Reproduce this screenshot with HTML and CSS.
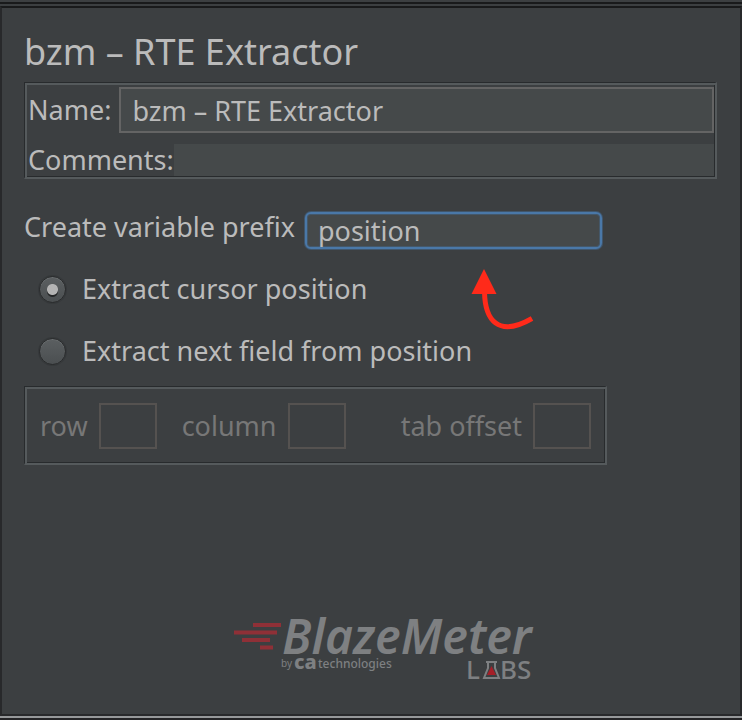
FILE: index.html
```html
<!DOCTYPE html>
<html lang="en">
<head>
<meta charset="utf-8">
<title>bzm – RTE Extractor</title>
<link rel="stylesheet" href="styles.css">
</head>
<body>
<div class="divider"></div>
<main class="window">
  <h1 class="title">bzm – RTE Extractor</h1>
  <form class="form">
    <div class="panel element">
      <div class="element-row name-row">
        <label for="name">Name:</label>
        <input class="field name-field" id="name" type="text" value="bzm – RTE Extractor">
      </div>
      <div class="element-row comments-row">
        <label for="comments">Comments:</label>
        <input class="field comments-field" id="comments" type="text">
      </div>
    </div>

    <div class="prefix-row">
      <label for="prefix">Create variable prefix</label>
      <div class="prefix-wrap">
        <input class="field prefix-field" id="prefix" type="text" value="position">
        <svg class="arrow" viewBox="0 0 64 62" width="64" height="62" aria-hidden="true">
          <path d="M14.500 24C15 52 28 70 62 50.500" fill="none" stroke="#ff2a1a" stroke-width="5"/>
          <path d="M14 1L26.500 26H1.500Z" fill="#ff2a1a"/>
        </svg>
      </div>
    </div>

    <div class="option">
      <input class="radio" type="radio" name="mode" id="cursor" checked>
      <label for="cursor">Extract cursor position</label>
    </div>
    <div class="option">
      <input class="radio" type="radio" name="mode" id="next">
      <label for="next">Extract next field from position</label>
    </div>

    <div class="panel position">
      <label class="row-label" for="row">row</label>
      <input class="field small" id="row" type="text" disabled>
      <label class="column-label" for="column">column</label>
      <input class="field small" id="column" type="text" disabled>
      <label class="tab-label" for="tab">tab offset</label>
      <input class="field small" id="tab" type="text" disabled>
    </div>
  </form>

  <footer class="brand">
    <svg class="logo" viewBox="0 -12 310 90" width="310" height="90" role="img" aria-label="BlazeMeter Labs by ca technologies">
      <path d="M21 12H49M2 19.500H45M10 27H38M28 34.500H41" stroke="#8f3037" stroke-width="4"/>
      <text class="logo-name" x="50" y="41">BlazeMeter</text>
      <text class="logo-by" x="49" y="54">by</text>
      <text class="logo-ca" x="62" y="56">ca</text>
      <text class="logo-tech" x="86" y="55">technologies</text>
      <text class="logo-labs" x="234" y="66">L</text>
      <text class="logo-labs" x="268" y="66">BS</text>
      <path d="M259.500 53L264 62H255Z" fill="#a51f28"/>
      <path d="M254 49H265M256 49V55L252 65H267L263 55V49" fill="none" stroke="#7e8082" stroke-width="2"/>
    </svg>
  </footer>
</main>
<div class="bottom-bar"></div>
</body>
</html>
```
FILE: styles.css
```css
* {
  box-sizing: border-box;
}

body {
  margin: 0;
  min-height: 100vh;
  display: flex;
  flex-direction: column;
  background: #3c3f41;
  color: #bbbbbb;
  font-family: "Noto Sans", "Open Sans", sans-serif;
  font-size: 27px;
  line-height: 36px;
}

.divider {
  height: 6px;
  border-top: 2px solid #3c3f41;
  background: linear-gradient(#191a1b 2px, #3c3f41 2px);
}

.window {
  flex: 1;
  display: flex;
  flex-direction: column;
  padding: 20px 23px 23px 22px;
  border: 2px solid #28292b;
  border-top-color: #191a1b;
}

.bottom-bar {
  height: 4px;
  background: #242426;
  border-top: 2px solid #96989a;
}

.title {
  margin: 0 0 6px;
  font-size: 36px;
  font-weight: 400;
  line-height: 48px;
}

.form {
  display: flex;
  flex-direction: column;
}

.panel {
  border: 1px solid #282b2d;
  border-right: 2px solid #555a5c;
  border-bottom: 2px solid #555a5c;
  box-shadow: inset 2px 2px #555a5c, inset -1px -1px #282b2d;
}

.element {
  display: flex;
  flex-direction: column;
  gap: 11px;
  padding: 4px 1px 1px 3px;
}

.element-row {
  display: flex;
  align-items: center;
}

.name-row {
  gap: 8px;
}

.comments-row label {
  line-height: 32px;
}

.field {
  min-width: 0;
  margin: 0;
  padding: 0 11px;
  border: 2px solid #646464;
  outline: 0;
  background: #45494a;
  color: inherit;
  font: inherit;
}

.name-field {
  flex: 1;
  height: 46px;
}

.comments-field {
  flex: 1;
  height: 32px;
  border: 0;
}

.prefix-row {
  display: flex;
  align-items: center;
  gap: 10px;
  margin-top: 30px;
}

.prefix-row label {
  margin-bottom: 6px;
}

.prefix-wrap {
  position: relative;
  flex: 0 1 297px;
}

.prefix-field {
  display: block;
  width: 100%;
  height: 37px;
  border-color: #4a78a8;
  border-radius: 6px;
  box-shadow: 0 0 0 1px #40566c, inset 0 0 0 1px #44586a;
}

.arrow {
  position: absolute;
  top: 56px;
  left: 165px;
}

.option {
  display: flex;
  align-items: center;
  gap: 16px;
  height: 62px;
  padding-left: 15px;
}

.prefix-row + .option {
  margin-top: 7px;
}

.radio {
  appearance: none;
  flex: none;
  width: 27px;
  height: 27px;
  margin: 0;
  border: 1px solid #292b2c;
  border-radius: 50%;
  background: linear-gradient(#5b5f61, #4b4f51);
  box-shadow: 0 0 0 1px #36393b, inset 0 1px #696d6f;
}

.radio:checked {
  background:
    radial-gradient(circle at 50% 50%, #b4b4b4 5px, transparent 6px),
    radial-gradient(circle at 50% 58%, #252728 5px, transparent 6px),
    linear-gradient(#5b5f61, #4b4f51);
}

.position {
  display: flex;
  align-items: center;
  width: 583px;
  max-width: 100%;
  margin-top: 4px;
  padding: 16px 14px 14px 15px;
  color: #777777;
}

.small {
  width: 58px;
  height: 46px;
  border-color: #555250;
  background: transparent;
}

.row-label,
.column-label,
.tab-label {
  padding-right: 11px;
}

.column-label {
  padding-left: 25px;
}

.tab-label {
  margin-left: auto;
}

.brand {
  display: flex;
  justify-content: center;
  margin-top: auto;
  padding-left: 33px;
}

.logo {
  max-width: 100%;
  fill: #7e8082;
}

.logo-name {
  font: italic 600 48px "Noto Sans", sans-serif;
}

.logo-by {
  font: 10px "Noto Sans", sans-serif;
}

.logo-ca {
  font: 800 20px "Noto Sans", sans-serif;
}

.logo-tech {
  font: 500 12px "Noto Sans", sans-serif;
}

.logo-labs {
  font: 500 26px "Noto Sans", sans-serif;
}
```
